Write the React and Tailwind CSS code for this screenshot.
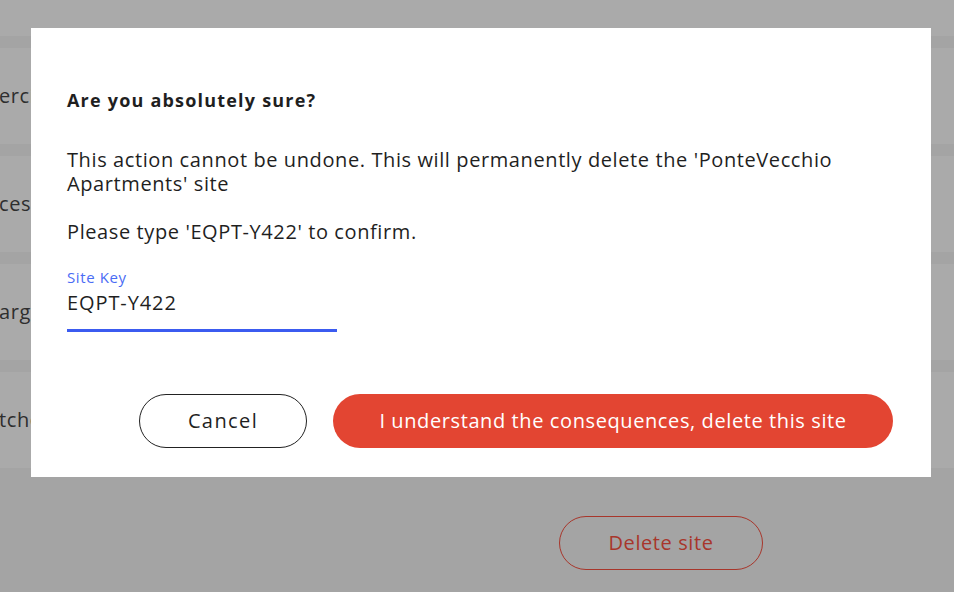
import React from 'react';

const rows = ['ercial', 'cess', 'arge', 'tched'];

export default function App() {
  return (
    <div
      className="relative w-[954px] h-[592px] overflow-hidden bg-[#a4a4a4] text-[#1f1f1f] tracking-[0.6px]"
      style={{ fontFamily: '"Open Sans", "Noto Sans", sans-serif' }}
    >
      {/* dimmed page behind the dialog */}
      <div className="h-[36px] bg-[#aaaaaa]" />
      <div className="flex flex-col gap-[12px] pt-[12px]">
        {rows.map((r) => (
          <div key={r} className="h-[96px] bg-[#aaaaaa] flex items-center">
            <span className="text-[20px] text-[#2e2e2e] -ml-[1px]">{r}</span>
          </div>
        ))}
      </div>
      <div className="flex pl-[559px] pt-[48px]">
        <button className="w-[204px] h-[54px] rounded-full border border-[#a8362b] text-[#a8362b] text-[20px]">
          Delete site
        </button>
      </div>

      {/* dialog */}
      <div className="absolute left-[31px] top-[28px] w-[900px] bg-white pl-[36px] pr-[38px] pt-[60px] pb-[29px]">
        <h2 className="text-[18px] leading-[24px] font-bold tracking-[1.2px] text-[#1f1f1f]">Are you absolutely sure?</h2>
        <p className="mt-[36px] text-[20px] leading-[24px] pr-[20px]">
          This action cannot be undone. This will permanently delete the 'PonteVecchio Apartments' site
        </p>
        <p className="mt-[24px] text-[20px] leading-[24px]">Please type 'EQPT-Y422' to confirm.</p>

        <div className="mt-[23px] w-[270px]">
          <label className="block text-[15px] leading-[20px] text-[#4a6cf5]">Site Key</label>
          <div className="mt-[2px] pb-[12px] border-b-[3px] border-[#3b5bf0] text-[20px] leading-[28px] tracking-[0.9px]">
            EQPT-Y422
          </div>
        </div>

        <div className="mt-[62px] flex justify-end items-center gap-[26px]">
          <button className="w-[168px] h-[54px] rounded-full border border-[#222] text-[20px] tracking-[1.4px] text-[#1f1f1f]">
            Cancel
          </button>
          <button className="w-[560px] h-[54px] rounded-full bg-[#e34532] text-white text-[20px]">
            I understand the consequences, delete this site
          </button>
        </div>
      </div>
    </div>
  );
}
